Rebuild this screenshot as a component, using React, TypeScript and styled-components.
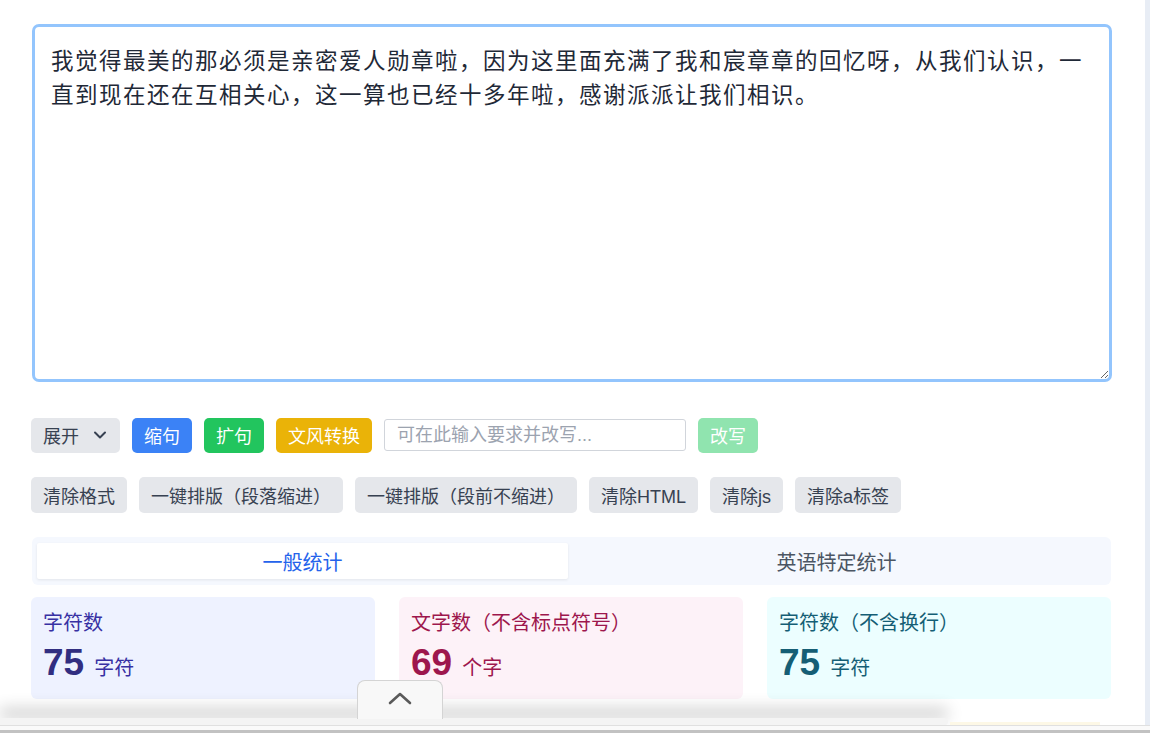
import React, { useState } from 'react';
import styled, { createGlobalStyle } from 'styled-components';

const GlobalStyle = createGlobalStyle`
  html, body {
    margin: 0;
    padding: 0;
    background: #fff;
    font-family: "Liberation Sans", "Noto Sans CJK SC", sans-serif;
    overflow: hidden;
  }
  * {
    box-sizing: border-box;
  }
`;

const Page = styled.div`
  width: 1150px;
  height: 733px;
  position: relative;
  overflow: hidden;
`;

// 오른쪽 스크롤바 자리
const Gutter = styled.div`
  position: absolute;
  top: 0;
  right: 0;
  width: 5px;
  height: 725px;
  background: #e8edf5;
`;

const Main = styled.div`
  width: 1111px;
  padding: 24px 0 0 31px;
  display: flex;
  flex-direction: column;
`;

const Editor = styled.textarea`
  display: block;
  width: 1080px;
  height: 358px;
  margin-left: 1px;
  border: 3px solid #93c5fd;
  border-radius: 7px;
  padding: 18px 16px 16px 16px;
  font-family: "Liberation Sans", "Noto Sans CJK SC", sans-serif;
  font-size: 22.5px;
  letter-spacing: 1.5px;
  line-height: 34px;
  color: #1f2937;
  outline: none;
  resize: vertical;
`;

const ActionRow = styled.div`
  display: flex;
  align-items: center;
  gap: 12px;
  margin-top: 35px;
  height: 36px;
`;

const ToolRow = styled.div`
  display: flex;
  align-items: center;
  gap: 12px;
  margin-top: 24px;
  height: 36px;
`;

interface IBtn {
  tone: 'gray' | 'blue' | 'green' | 'yellow' | 'faded';
}

const toneBg = {
  gray: '#e5e7eb',
  blue: '#3b82f6',
  green: '#22c55e',
  yellow: '#eab308',
  faded: '#90e4af',
};

const Btn = styled.button<IBtn>`
  height: 35px;
  padding: 0 12px;
  border: none;
  border-radius: 5px;
  background-color: ${(props) => toneBg[props.tone]};
  color: ${(props) => (props.tone === 'gray' ? '#374151' : '#fff')};
  font-family: "Liberation Sans", "Noto Sans CJK SC", sans-serif;
  font-size: 18px;
  display: flex;
  align-items: center;
  gap: 13px;
  cursor: pointer;
  white-space: nowrap;
`;

const ToolBtn = styled(Btn)`
  height: 36px;
`;

const AskInput = styled.input`
  width: 302px;
  height: 32px;
  border: 1px solid #d1d5db;
  border-radius: 3px;
  padding: 0 12px;
  font-family: "Liberation Sans", "Noto Sans CJK SC", sans-serif;
  font-size: 18px;
  color: #374151;
  outline: none;
  &::placeholder {
    color: #9ca3af;
  }
`;

const Tabs = styled.div`
  margin-top: 24px;
  margin-left: 1px;
  width: 1079px;
  height: 48px;
  padding: 6px 6px 6px 5px;
  background: #f5f8fe;
  border-radius: 6px;
  display: grid;
  grid-template-columns: 531px 1fr;
`;

interface ITab {
  active: boolean;
}

const Tab = styled.div<ITab>`
  display: flex;
  align-items: center;
  justify-content: center;
  font-size: 20px;
  color: ${(props) => (props.active ? '#2563eb' : '#4b5563')};
  background: ${(props) => (props.active ? '#fff' : 'transparent')};
  box-shadow: ${(props) => (props.active ? '0 1px 3px rgba(0, 0, 0, 0.08)' : 'none')};
  border-radius: 2px;
`;

const Cards = styled.div`
  margin-top: 12px;
  display: grid;
  grid-template-columns: 344px 344px 344px;
  gap: 24px;
`;

interface ICard {
  bg: string;
  fg: string;
  strong: string;
}

const Card = styled.div<ICard>`
  height: 102px;
  border-radius: 6px;
  background: ${(props) => props.bg};
  color: ${(props) => props.fg};
  padding: 12px 12px 0 12px;
  display: flex;
  flex-direction: column;
  strong {
    color: ${(props) => props.strong};
  }
`;

const CardLabel = styled.div`
  font-size: 20px;
  line-height: 28px;
`;

const CardValue = styled.div`
  display: flex;
  align-items: baseline;
  gap: 10px;
  margin-top: 6px;
  strong {
    font-size: 37px;
    font-weight: 700;
    line-height: 40px;
  }
  span {
    font-size: 20px;
  }
`;

// 하단 도크 (브라우저 패널)
const Dock = styled.div`
  position: absolute;
  left: 0;
  bottom: 0;
  width: 1150px;
  height: 15px;
`;

const DockBar = styled.div`
  position: absolute;
  left: 0;
  top: 0;
  width: 948px;
  height: 7px;
  background: #f4f4f4;
  border-radius: 0 6px 6px 0;
  box-shadow: 0 -8px 16px rgba(0, 0, 0, 0.3);
`;

const DockGlow = styled.div`
  position: absolute;
  left: 950px;
  top: 4px;
  width: 150px;
  height: 3px;
  background: #fdf8e6;
`;

const DockBase = styled.div`
  position: absolute;
  left: 0;
  top: 7px;
  width: 100%;
  height: 8px;
  background: #fafafa;
  border-top: 1px solid #e0e0e0;
  border-bottom: 3px solid #c2c2c2;
`;

const Handle = styled.button`
  position: absolute;
  left: 357px;
  bottom: 14px;
  width: 86px;
  height: 39px;
  border: 1px solid #d4d4d4;
  border-bottom: none;
  border-radius: 8px 8px 0 0;
  background: #f8f8f8;
  display: flex;
  align-items: center;
  justify-content: center;
  padding: 0 0 4px 0;
  z-index: 2;
`;

function ChevronDown() {
  return (
    <svg width="16" height="16" viewBox="0 0 16 16" fill="none">
      <path d="M3 5.5 L8 10.5 L13 5.5" stroke="#374151" strokeWidth="2" strokeLinecap="round" strokeLinejoin="round" />
    </svg>
  );
}

function ChevronUp() {
  return (
    <svg width="24" height="14" viewBox="0 0 24 14" fill="none">
      <path d="M2 12 L12 3 L22 12" stroke="#5a5a5a" strokeWidth="2.6" strokeLinecap="round" strokeLinejoin="round" />
    </svg>
  );
}

const initialText =
  '我觉得最美的那必须是亲密爱人勋章啦，因为这里面充满了我和宸章章的回忆呀，从我们认识，一直到现在还在互相关心，这一算也已经十多年啦，感谢派派让我们相识。';

function App() {
  const [text, setText] = useState(initialText);
  const [ask, setAsk] = useState('');
  const [tab, setTab] = useState(0);

  const plain = text.replace(/\n/g, '');
  const words = text.replace(/[\s，。、！？；：“”‘’（）《》,.!?;:'"()]/g, '').length;

  return (
    <Page>
      <GlobalStyle />
      <Main>
        <Editor value={text} onChange={(e) => setText(e.target.value)} />
        <ActionRow>
          <Btn tone="gray">
            展开
            <ChevronDown />
          </Btn>
          <Btn tone="blue">缩句</Btn>
          <Btn tone="green">扩句</Btn>
          <Btn tone="yellow">文风转换</Btn>
          <AskInput placeholder="可在此输入要求并改写..." value={ask} onChange={(e) => setAsk(e.target.value)} />
          <Btn tone="faded">改写</Btn>
        </ActionRow>
        <ToolRow>
          <ToolBtn tone="gray">清除格式</ToolBtn>
          <ToolBtn tone="gray">一键排版（段落缩进）</ToolBtn>
          <ToolBtn tone="gray">一键排版（段前不缩进）</ToolBtn>
          <ToolBtn tone="gray">清除HTML</ToolBtn>
          <ToolBtn tone="gray">清除js</ToolBtn>
          <ToolBtn tone="gray">清除a标签</ToolBtn>
        </ToolRow>
        <Tabs>
          <Tab active={tab === 0} onClick={() => setTab(0)}>
            一般统计
          </Tab>
          <Tab active={tab === 1} onClick={() => setTab(1)}>
            英语特定统计
          </Tab>
        </Tabs>
        <Cards>
          <Card bg="#eef2ff" fg="#3730a3" strong="#312e81">
            <CardLabel>字符数</CardLabel>
            <CardValue>
              <strong>{text.length}</strong>
              <span>字符</span>
            </CardValue>
          </Card>
          <Card bg="#fdf2f8" fg="#9d174d" strong="#9d174d">
            <CardLabel>文字数（不含标点符号）</CardLabel>
            <CardValue>
              <strong>{words}</strong>
              <span>个字</span>
            </CardValue>
          </Card>
          <Card bg="#ecfeff" fg="#155e75" strong="#155e75">
            <CardLabel>字符数（不含换行）</CardLabel>
            <CardValue>
              <strong>{plain.length}</strong>
              <span>字符</span>
            </CardValue>
          </Card>
        </Cards>
      </Main>
      <Gutter />
      <Dock>
        <DockBar />
        <DockGlow />
        <DockBase />
        <Handle type="button">
          <ChevronUp />
        </Handle>
      </Dock>
    </Page>
  );
}

export default App;
